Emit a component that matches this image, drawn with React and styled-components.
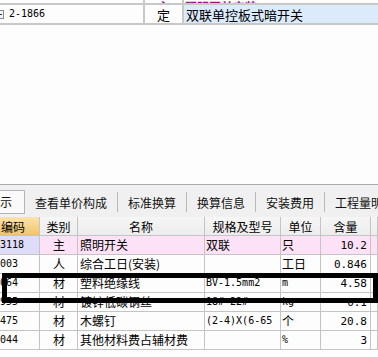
import React from 'react';
import styled, { createGlobalStyle } from 'styled-components';

const Global = createGlobalStyle`
  html, body { margin: 0; padding: 0; background: #fdfdfd; }
`;

const Page = styled.div`
  position: relative;
  width: 378px;
  height: 357px;
  overflow: hidden;
  display: flex;
  flex-direction: column;
  background: #fdfdfd;
  color: #000;
  font-family: "Noto Sans CJK SC", sans-serif;
  font-size: 12px;
`;

/* ---- upper grid (scrolled list of quota items) ---- */
const TopRow = styled.div`
  display: grid;
  grid-template-columns: 145px 39px 1fr;
  height: ${({ h }) => h}px;
  box-sizing: border-box;
  overflow: hidden;
  border-bottom: ${({ line }) => (line ? '2px solid #c8c8c8' : 'none')};
  flex-shrink: 0;
`;

const TopCell = styled.div`
  display: flex;
  align-items: ${({ clip }) => (clip ? 'flex-end' : 'center')};
  justify-content: ${({ center }) => (center ? 'center' : 'flex-start')};
  gap: 5px;
  padding-left: ${({ pad }) => pad || 0}px;
  border-right: ${({ last }) => (last ? 'none' : '2px solid #c8c8c8')};
  background: ${({ bg }) => bg || 'transparent'};
  color: ${({ color }) => color || '#000'};
  font-size: ${({ size }) => size || 12}px;
  line-height: 1;
  white-space: nowrap;
  overflow: hidden;
`;

const Clipped = styled.span`
  margin-bottom: -10px;
  font-weight: bold;
`;

const Collapse = styled.span`
  width: 9px;
  height: 9px;
  margin-left: -5px;
  box-sizing: border-box;
  border: 1px solid #8c8c8c;
  background: #f4f4f4;
  display: flex;
  align-items: center;
  justify-content: center;
  &::after {
    content: '';
    width: 5px;
    height: 1px;
    background: #333;
  }
`;

const Mono = styled.span`
  font-family: "DejaVu Sans Mono", "Liberation Mono", monospace;
  font-size: ${({ size }) => size || 10}px;
`;

const Blank = styled.div`
  flex: 1;
  background: #fdfdfd;
  border-bottom: 1px solid #a8a8b0;
`;

const Footer = styled.div`
  height: 7px;
  flex-shrink: 0;
  background: #fdfdfd;
`;

/* ---- tab strip ---- */
const TabBar = styled.div`
  height: 32px;
  flex-shrink: 0;
  display: flex;
  align-items: center;
  background: #f0f0f0;
  overflow: hidden;
  white-space: nowrap;
`;

const Tab = styled.div`
  display: flex;
  align-items: center;
  height: ${({ active }) => (active ? 24 : 20)}px;
  padding: 0 ${({ active }) => (active ? 12 : 10)}px;
  margin-left: ${({ shift }) => shift || 0}px;
  margin-top: ${({ active }) => (active ? 1 : 2)}px;
  box-sizing: border-box;
  border: ${({ active }) => (active ? '1px solid #b4b4b4' : 'none')};
  border-right: ${({ active }) => (active ? '1px solid #b4b4b4' : '1px solid #b8b8b8')};
  background: ${({ active }) => (active ? '#fafafa' : 'transparent')};
  font-size: 12px;
  color: #111;
`;

/* ---- resource table ---- */
const cols = '40px 38px 127px 76px 40px 50px 1fr';

const Row = styled.div`
  display: grid;
  grid-template-columns: ${cols};
  height: 19px;
  box-sizing: border-box;
  border-bottom: 1px solid #c4c4c4;
  background: ${({ bg }) => bg || '#fdfdfd'};
  flex-shrink: 0;
`;

const Head = styled.div`
  display: flex;
  align-items: center;
  justify-content: ${({ right }) => (right ? 'flex-end' : 'center')};
  padding-right: ${({ right }) => (right ? 14 : 0)}px;
  border-right: 1px solid #c4c4c4;
  background: ${({ hot }) =>
    hot
      ? 'linear-gradient(#fbe3ad, #f2c468)'
      : 'linear-gradient(#f6f6f6, #ececec)'};
  font-size: 12px;
  white-space: nowrap;
  overflow: hidden;
`;

const Cell = styled.div`
  display: flex;
  align-items: center;
  justify-content: ${({ align }) =>
    align === 'center' ? 'center' : align === 'right' ? 'flex-end' : 'flex-start'};
  padding: 0 ${({ align }) => (align === 'right' ? 3 : 0)}px 0
    ${({ pl }) => (pl !== undefined ? pl : 1)}px;
  border-right: 1px solid #c4c4c4;
  background: ${({ bg }) => bg || 'transparent'};
  font-size: 12px;
  line-height: 1;
  white-space: nowrap;
  overflow: hidden;
`;

const Marker = styled.div`
  position: absolute;
  left: 2px;
  top: 273px;
  width: 376px;
  height: 30px;
  box-sizing: border-box;
  border: 5px solid #000;
  pointer-events: none;
`;

const tabs = ['查看单价构成', '标准换算', '换算信息', '安装费用', '工程量明细'];

const rows = [
  { code: '3118', kind: '主', name: '照明开关', spec: '双联', unit: '只', qty: '10.2', pink: true },
  { code: '003', kind: '人', name: '综合工日(安装)', spec: '', unit: '工日', qty: '0.846' },
  { code: '064', kind: '材', name: '塑料绝缘线', spec: 'BV-1.5mm2', unit: 'm', qty: '4.58' },
  { code: '955', kind: '材', name: '镀锌低碳钢丝', spec: '18#~22#', unit: 'kg', qty: '0.1' },
  { code: '475', kind: '材', name: '木螺钉', spec: '(2-4)X(6-65', unit: '个', qty: '20.8' },
  { code: '044', kind: '材', name: '其他材料费占辅材费', spec: '', unit: '%', qty: '3' },
];

const isLatin = (s) => /^[\x00-\x7f]+$/.test(s);

export default function App() {
  return (
    <Page>
      <Global />
      <TopRow h={5} line>
        <TopCell clip />
        <TopCell clip center color="#a0148c"><Clipped>主</Clipped></TopCell>
        <TopCell clip last pad={1} color="#a0148c"><Clipped>照明开关安装</Clipped></TopCell>
      </TopRow>
      <TopRow h={20} line>
        <TopCell><Collapse /><Mono>2-1866</Mono></TopCell>
        <TopCell center size={13}>定</TopCell>
        <TopCell last pad={2} bg="#dcebfb" size={13}>双联单控板式暗开关</TopCell>
      </TopRow>
      <Blank />

      <TabBar>
        <Tab active shift={-25}>显示</Tab>
        {tabs.map((t) => (
          <Tab key={t}>{t}</Tab>
        ))}
      </TabBar>

      <Row>
        <Head hot right>编码</Head>
        <Head>类别</Head>
        <Head>名称</Head>
        <Head>规格及型号</Head>
        <Head>单位</Head>
        <Head>含量</Head>
        <Head />
      </Row>
      {rows.map((r) => (
        <Row key={r.code} bg={r.pink ? '#fde2f7' : undefined}>
          <Cell pl={0} bg={r.pink ? '#dedcf8' : undefined}><Mono>{r.code}</Mono></Cell>
          <Cell align="center">{r.kind}</Cell>
          <Cell pl={2}>{r.name}</Cell>
          <Cell>{isLatin(r.spec) ? <Mono>{r.spec}</Mono> : r.spec}</Cell>
          <Cell>{isLatin(r.unit) ? <Mono>{r.unit}</Mono> : r.unit}</Cell>
          <Cell align="right"><Mono size={11}>{r.qty}</Mono></Cell>
          <Cell />
        </Row>
      ))}
      <Footer />
      <Marker />
    </Page>
  );
}
